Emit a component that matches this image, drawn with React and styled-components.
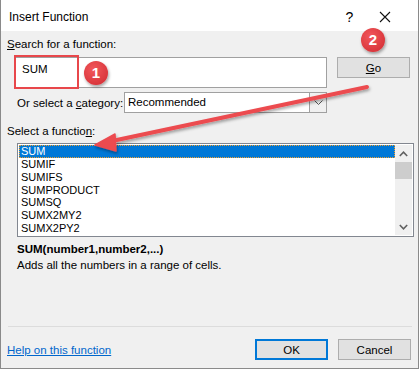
import React from 'react';
import styled, { createGlobalStyle } from 'styled-components';

const functions = ['SUM', 'SUMIF', 'SUMIFS', 'SUMPRODUCT', 'SUMSQ', 'SUMX2MY2', 'SUMX2PY2'];

const App = () => {
  return (
    <Dialog>
        <GlobalStyle />
        <TitleBar>
            <Title>Insert Function</Title>
            <TitleButtons>
                <TitleButton>?</TitleButton>
                <TitleButton>
                    <svg width="12" height="12" viewBox="0 0 12 12">
                        <path d="M1 1 L11 11 M11 1 L1 11" stroke="#111" strokeWidth="1.1" />
                    </svg>
                </TitleButton>
            </TitleButtons>
        </TitleBar>
        <Body>
            <Label><u>S</u>earch for a function:</Label>
            <SearchRow>
                <SearchInput>SUM</SearchInput>
                <Button><u>G</u>o</Button>
            </SearchRow>
            <CategoryRow>
                <Label>Or select a <u>c</u>ategory:</Label>
                <Select>
                    <SelectText>Recommended</SelectText>
                    <SelectArrow>
                        <svg width="9" height="5" viewBox="0 0 9 5">
                            <path d="M0.5 0.5 L4.5 4.5 L8.5 0.5" stroke="#555" fill="none" strokeWidth="1" />
                        </svg>
                    </SelectArrow>
                </Select>
            </CategoryRow>
            <ListLabel>Select a functio<u>n</u>:</ListLabel>
            <ListBox>
                <Items>
                    {functions.map((f, i) => (
                        <Item key={f} selected={i === 0}>{f}</Item>
                    ))}
                </Items>
                <ScrollBar>
                    <ScrollArrow>
                        <svg width="9" height="6" viewBox="0 0 9 6">
                            <path d="M0.8 5 L4.5 1.2 L8.2 5" stroke="#606060" fill="none" strokeWidth="1.6" />
                        </svg>
                    </ScrollArrow>
                    <Thumb />
                    <ScrollSpace />
                    <ScrollArrow>
                        <svg width="9" height="6" viewBox="0 0 9 6">
                            <path d="M0.8 1 L4.5 4.8 L8.2 1" stroke="#606060" fill="none" strokeWidth="1.6" />
                        </svg>
                    </ScrollArrow>
                </ScrollBar>
            </ListBox>
            <Syntax>SUM(number1,number2,...)</Syntax>
            <Description>Adds all the numbers in a range of cells.</Description>
            <Separator />
            <Footer>
                <HelpLink>Help on this function</HelpLink>
                <FooterButtons>
                    <Button primary>OK</Button>
                    <Button>Cancel</Button>
                </FooterButtons>
            </Footer>
        </Body>
        <Overlay width="419" height="369" viewBox="0 0 419 369">
            <defs>
                <filter id="shadow" x="-20%" y="-20%" width="140%" height="160%">
                    <feDropShadow dx="1" dy="2" stdDeviation="1.5" floodColor="#000" floodOpacity="0.35" />
                </filter>
                <radialGradient id="badge" cx="40%" cy="35%" r="65%">
                    <stop offset="0%" stopColor="#f2575b" />
                    <stop offset="100%" stopColor="#d9363c" />
                </radialGradient>
            </defs>
            <rect x="15" y="56" width="63" height="32" fill="none" stroke="#e8474b" strokeWidth="2" />
            <g filter="url(#shadow)">
                <line x1="367" y1="87" x2="112" y2="141" stroke="#ec4b50" strokeWidth="4" strokeLinecap="round" />
                <path d="M95 145 L115 134 L116 151 Z" fill="#ec4b50" stroke="#ec4b50" strokeWidth="1.5" strokeLinejoin="round" />
            </g>
            <g filter="url(#shadow)">
                <circle cx="96" cy="73" r="12" fill="url(#badge)" />
                <circle cx="373" cy="40" r="12" fill="url(#badge)" />
            </g>
            <BadgeText x="96" y="78">1</BadgeText>
            <BadgeText x="373" y="45">2</BadgeText>
        </Overlay>
    </Dialog>
  );
};

const GlobalStyle = createGlobalStyle`
    body {
        margin: 0;
        font-family: "Liberation Sans", Arial, sans-serif;
        font-size: 11.5px;
        color: #000;
    }
`;

const Dialog = styled.div`
    position: relative;
    width: 419px;
    height: 369px;
    box-sizing: border-box;
    background: #f0f0f0;
    border: 1px solid #8a8a8a;
    border-top: none;
    display: flex;
    flex-direction: column;
    overflow: hidden;
`;

const TitleBar = styled.div`
    height: 31px;
    background: #fff;
    display: flex;
    align-items: center;
    justify-content: space-between;
    padding-left: 8px;
`;

const Title = styled.span`
    font-size: 12px;
    margin-top: 2px;
`;

const TitleButtons = styled.div`
    display: flex;
    height: 100%;
    padding-right: 16px;
`;

const TitleButton = styled.div`
    width: 35px;
    display: flex;
    align-items: center;
    justify-content: center;
    font-size: 14px;
    margin-top: 2px;
`;

const Body = styled.div`
    flex: 1;
    display: flex;
    flex-direction: column;
    padding: 5px 5px 0 6px;
`;

const Label = styled.div`
    line-height: 16px;
    white-space: nowrap;
`;

const SearchRow = styled.div`
    display: flex;
    align-items: flex-start;
    margin-top: 5px;
    padding-left: 7px;
`;

const SearchInput = styled.div`
    width: 313px;
    height: 31px;
    box-sizing: border-box;
    background: #fff;
    border: 1px solid #a0a0a0;
    padding: 3px 0 0 7px;
    line-height: 16px;
`;

const Button = styled.div`
    width: 73px;
    height: 21px;
    box-sizing: border-box;
    margin-left: 10px;
    background: #e1e1e1;
    border: ${props => props.primary ? '2px solid #0078d7' : '1px solid #adadad'};
    display: flex;
    align-items: center;
    justify-content: center;
    line-height: 16px;
`;

const CategoryRow = styled.div`
    display: flex;
    align-items: center;
    margin-top: 4px;
    padding-left: 10px;
`;

const Select = styled.div`
    width: 203px;
    height: 21px;
    box-sizing: border-box;
    background: #fff;
    border: 1px solid #a0a0a0;
    display: flex;
    margin-left: auto;
    margin-right: 86px;
`;

const SelectText = styled.div`
    flex: 1;
    padding-left: 3px;
    line-height: 19px;
`;

const SelectArrow = styled.div`
    width: 16px;
    border-left: 1px solid #a0a0a0;
    background: #f0f0f0;
    display: flex;
    align-items: center;
    justify-content: center;
`;

const ListLabel = styled(Label)`
    margin-top: 10px;
`;

const ListBox = styled.div`
    margin: 4px 0 0 10px;
    width: 397px;
    height: 94px;
    box-sizing: border-box;
    border: 1px solid #828790;
    background: #fff;
    display: flex;
    padding: 1px;
`;

const Items = styled.div`
    flex: 1;
    display: flex;
    flex-direction: column;
`;

const Item = styled.div`
    height: 13px;
    line-height: 13px;
    font-size: 11px;
    padding-left: 2px;
    box-sizing: border-box;
    overflow: hidden;
    background: ${props => props.selected ? '#0078d7' : 'transparent'};
    color: ${props => props.selected ? '#fff' : '#000'};
    outline: ${props => props.selected ? '1px dotted #f0a030' : 'none'};
    outline-offset: -1px;
`;

const ScrollBar = styled.div`
    width: 17px;
    display: flex;
    flex-direction: column;
    background: #f0f0f0;
`;

const ScrollArrow = styled.div`
    height: 17px;
    display: flex;
    align-items: center;
    justify-content: center;
`;

const Thumb = styled.div`
    height: 17px;
    background: #cdcdcd;
`;

const ScrollSpace = styled.div`
    flex: 1;
`;

const Syntax = styled.div`
    font-weight: bold;
    margin: 4px 0 0 10px;
    line-height: 16px;
`;

const Description = styled.div`
    margin-left: 10px;
    line-height: 16px;
`;

const Separator = styled.div`
    height: 1px;
    background: #dcdcdc;
    margin: 53px 1px 0 1px;
`;

const Footer = styled.div`
    display: flex;
    align-items: center;
    justify-content: space-between;
    margin-top: 12px;
`;

const HelpLink = styled.span`
    color: #0066cc;
    text-decoration: underline;
    line-height: 16px;
`;

const FooterButtons = styled.div`
    display: flex;
    margin-right: 2px;
`;

const Overlay = styled.svg`
    position: absolute;
    left: -1px;
    top: 0;
    pointer-events: none;
`;

const BadgeText = styled.text`
    fill: #fff;
    font-size: 15px;
    font-weight: bold;
    text-anchor: middle;
    font-family: "Liberation Sans", sans-serif;
`;

export default App;
